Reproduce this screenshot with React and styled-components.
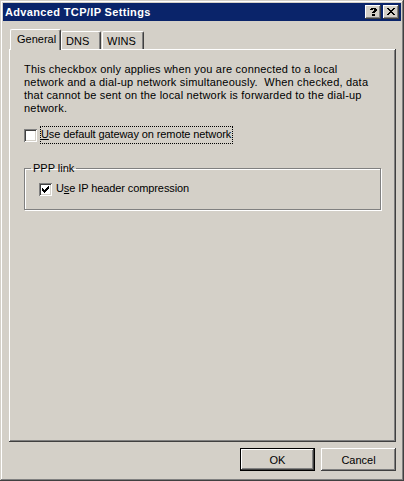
import React from 'react'
import styled, { createGlobalStyle } from 'styled-components'

const GlobalStyle = createGlobalStyle`
    html, body {
        margin: 0;
        padding: 0;
        background: #d4d0c8;
    }
    body {
        font-family: "Liberation Sans", Arial, sans-serif;
        font-size: 11px;
        color: #000;
    }
`

const CLOSE_GLYPH = [
    '##....##',
    '.##..##.',
    '..####..',
    '...##...',
    '..####..',
    '.##..##.',
    '##....##',
]

const HELP_GLYPH = [
    '.#####.',
    '###.###',
    '....###',
    '...###.',
    '..###..',
    '.......',
    '..###..',
    '..###..',
]

const CHECK_GLYPH = [
    '......#',
    '.....##',
    '#...###',
    '##.###.',
    '#####..',
    '.###...',
    '..#....',
]

const PixelGlyph = ({ rows }) => (
    <svg
        width={rows[0].length}
        height={rows.length}
        viewBox={`0 0 ${rows[0].length} ${rows.length}`}
        shapeRendering="crispEdges"
    >
        {rows.map((row, y) =>
            row.split('').map((c, x) =>
                c === '#' ? <rect key={`${x}-${y}`} x={x} y={y} width="1" height="1" fill="#000" /> : null
            )
        )}
    </svg>
)

const Window = styled.div`
    width: 404px;
    height: 481px;
    box-sizing: border-box;
    padding: 3px;
    display: flex;
    flex-direction: column;
    background: #d4d0c8;
    box-shadow: inset -1px -1px #404040, inset 1px 1px #d4d0c8,
        inset -2px -2px #808080, inset 2px 2px #fff;
`

const TitleBar = styled.div`
    height: 18px;
    display: flex;
    align-items: center;
    padding: 0 2px 0 2px;
    background: #0a246a;
`

const Title = styled.div`
    flex: 1;
    color: #fff;
    font-weight: bold;
    font-size: 11px;
    letter-spacing: 0.35px;
`

const CaptionButton = styled.div`
    width: 16px;
    height: 14px;
    box-sizing: border-box;
    margin-left: ${p => p.$gap || 0}px;
    padding-bottom: 1px;
    display: flex;
    align-items: center;
    justify-content: center;
    background: #d4d0c8;
    box-shadow: inset -1px -1px #404040, inset 1px 1px #fff,
        inset -2px -2px #808080, inset 2px 2px #d4d0c8;
`

const Client = styled.div`
    flex: 1;
    display: flex;
    flex-direction: column;
    padding: 8px 5px 0 6px;
`

const TabStrip = styled.div`
    height: 20px;
    display: flex;
    align-items: flex-end;
    position: relative;
    z-index: 1;
`

const Tab = styled.div`
    box-sizing: border-box;
    width: ${p => p.$width}px;
    height: ${p => (p.$active ? 21 : 18)}px;
    margin-left: ${p => p.$offset || 0}px;
    margin-bottom: ${p => (p.$active ? -1 : 0)}px;
    padding: ${p => (p.$active ? '3px 0 0 6px' : '3px 0 0 4px')};
    background: #d4d0c8;
    border-top: 1px solid #fff;
    border-left: 1px solid #fff;
    border-right: 1px solid #404040;
    border-radius: 2px 2px 0 0;
    box-shadow: inset -1px 0 #808080;
`

const Panel = styled.div`
    height: 393px;
    box-sizing: border-box;
    padding: 14px 14px 0 15px;
    background: #d4d0c8;
    box-shadow: inset -1px -1px #404040, inset 1px 1px #fff,
        inset -2px -2px #808080;
`

const Paragraph = styled.p`
    margin: 0;
    line-height: 13px;
    letter-spacing: 0.2px;
    white-space: pre;
`

const CheckRow = styled.div`
    display: flex;
    align-items: center;
    margin-top: ${p => p.$top || 0}px;
`

const Box = styled.div`
    width: 13px;
    height: 13px;
    box-sizing: border-box;
    display: flex;
    align-items: center;
    justify-content: center;
    background: #fff;
    box-shadow: inset 1px 1px #808080, inset -1px -1px #fff,
        inset 2px 2px #404040, inset -2px -2px #d4d0c8;
`

const Label = styled.span`
    margin-left: 3px;
    padding: 1px 1px 2px 0;
    line-height: 13px;
    letter-spacing: -0.1px;
    border: 1px dotted ${p => (p.$focused ? '#000' : 'transparent')};
`

const Group = styled.fieldset`
    margin: 18px 0 0 0;
    width: 357px;
    height: 48px;
    box-sizing: border-box;
    padding: 5px 0 0 14px;
    border: 1px solid #808080;
    border-radius: 0;
    box-shadow: 1px 1px 0 #fff, inset 1px 1px 0 #fff;
`

const Legend = styled.legend`
    padding: 0 2px;
    margin-left: -8px;
    line-height: 13px;
`

const ButtonRow = styled.div`
    display: flex;
    justify-content: flex-end;
    gap: 6px;
    margin-top: 6px;
`

const Button = styled.div`
    width: 75px;
    height: 23px;
    box-sizing: border-box;
    display: flex;
    align-items: center;
    justify-content: center;
    background: #d4d0c8;
    box-shadow: ${p =>
        p.$default
            ? 'inset 0 0 0 1px #000, inset -2px -2px #404040, inset 2px 2px #fff, inset -3px -3px #808080'
            : 'inset -1px -1px #404040, inset 1px 1px #fff, inset -2px -2px #808080, inset 2px 2px #d4d0c8'};
`

const App = () => (
    <>
        <GlobalStyle />
        <Window>
            <TitleBar>
                <Title>Advanced TCP/IP Settings</Title>
                <CaptionButton>
                    <PixelGlyph rows={HELP_GLYPH} />
                </CaptionButton>
                <CaptionButton $gap={2}>
                    <PixelGlyph rows={CLOSE_GLYPH} />
                </CaptionButton>
            </TitleBar>
            <Client>
                <TabStrip>
                    <Tab $active $width={51} $offset={1}>General</Tab>
                    <Tab $width={40}>DNS</Tab>
                    <Tab $width={42} $offset={1}>WINS</Tab>
                </TabStrip>
                <Panel>
                    <Paragraph>
                        {'This checkbox only applies when you are connected to a local\n' +
                            'network and a dial-up network simultaneously.  When checked, data\n' +
                            'that cannot be sent on the local network is forwarded to the dial-up\n' +
                            'network.'}
                    </Paragraph>
                    <CheckRow $top={11}>
                        <Box />
                        <Label $focused>
                            <u>U</u>se default gateway on remote network
                        </Label>
                    </CheckRow>
                    <Group>
                        <Legend>PPP link</Legend>
                        <CheckRow>
                            <Box>
                                <PixelGlyph rows={CHECK_GLYPH} />
                            </Box>
                            <Label>
                                U<u>s</u>e IP header compression
                            </Label>
                        </CheckRow>
                    </Group>
                </Panel>
                <ButtonRow>
                    <Button $default>OK</Button>
                    <Button>Cancel</Button>
                </ButtonRow>
            </Client>
        </Window>
    </>
)

export default App
